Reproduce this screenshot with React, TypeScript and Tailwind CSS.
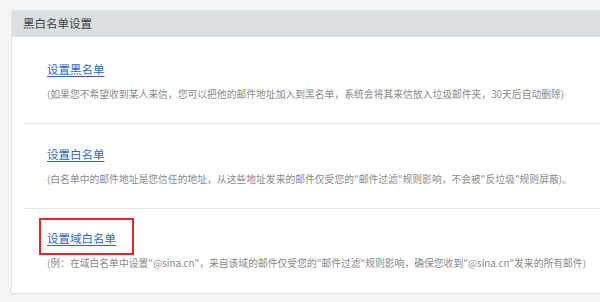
import React from "react";

const FONT = { fontFamily: '"Noto Sans CJK SC", "Noto Sans", "Liberation Sans", sans-serif' };

const rows = [
  {
    link: "设置黑名单",
    desc: "(如果您不希望收到某人来信，您可以把他的邮件地址加入到黑名单，系统会将其来信放入垃圾邮件夹，30天后自动删除)",
    box: "h-[87px] pt-[24px] border-b border-[#e6e6e6]",
  },
  {
    link: "设置白名单",
    desc: "(白名单中的邮件地址是您信任的地址，从这些地址发来的邮件仅受您的\"邮件过滤\"规则影响，不会被\"反垃圾\"规则屏蔽)。",
    box: "h-[85px] pt-[22px] border-b border-[#e6e6e6]",
  },
  {
    link: "设置域白名单",
    desc: "(例：在域白名单中设置\"@sina.cn\"，来自该域的邮件仅受您的\"邮件过滤\"规则影响，确保您收到\"@sina.cn\"发来的所有邮件)",
    box: "h-[84px] pt-[21px]",
    marked: true,
  },
];

export default function App() {
  return (
    <div className="h-[302px] bg-[#f4f4f4] pt-[10px] pl-[11px] overflow-hidden" style={FONT}>
      <div className="border border-r-0 border-[#e4e4e4] bg-white">
        <div className="h-[26px] bg-[#dcdfe2] flex items-center pl-[11px] text-[11.5px] text-[#3c3c3c]">
          黑白名单设置
        </div>
        <div className="ml-[11px]">
          {rows.map((r) => (
            <div key={r.link} className={r.box}>
              <div className="pl-[24px] flex">
                <div className="relative h-[16px] text-[11.5px] leading-[16px]">
                  <a href="#" className="text-[#3565b8] underline underline-offset-2 whitespace-nowrap">
                    {r.link}
                  </a>
                  {r.marked && (
                    <span className="absolute left-[-8px] right-[-18px] top-[-12px] bottom-[-9px] border-2 border-[#e3262b]" />
                  )}
                </div>
              </div>
              <div className="pl-[24px] mt-[10px] text-[9.8px] leading-[14px] text-[#8a8a8a] whitespace-nowrap">
                {r.desc}
              </div>
            </div>
          ))}
        </div>
      </div>
    </div>
  );
}
